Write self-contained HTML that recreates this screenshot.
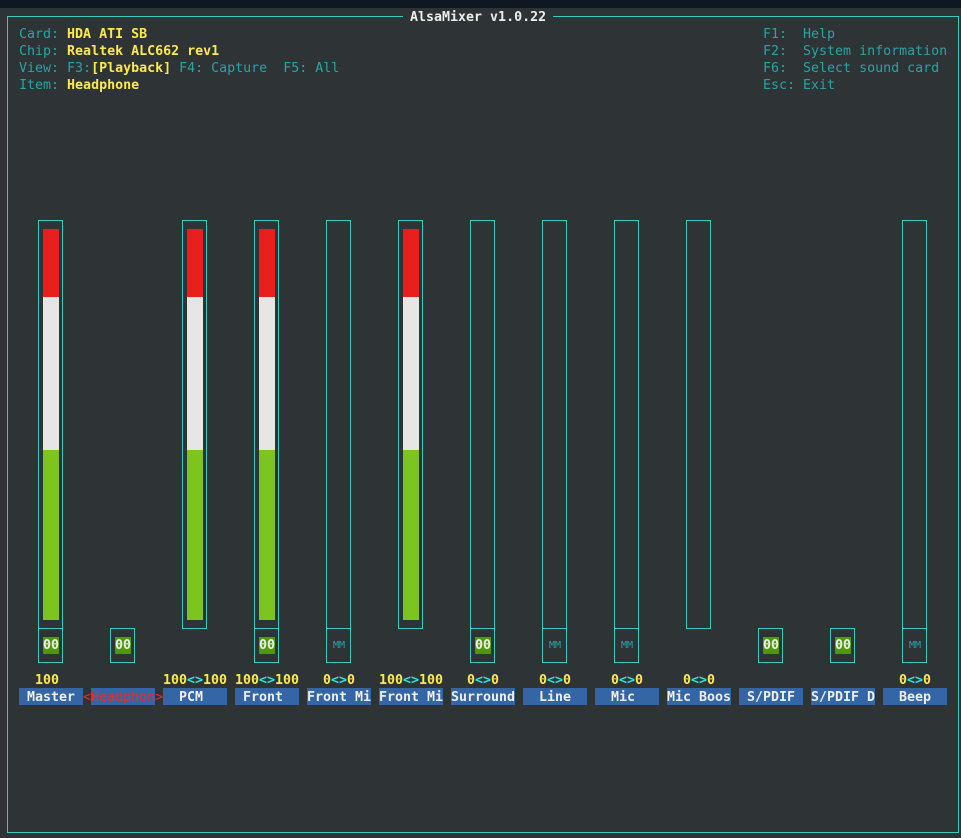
<!DOCTYPE html>
<html><head><meta charset="utf-8"><style>
html,body{margin:0;padding:0}
body{width:961px;height:838px;background:#2e3436;position:relative;overflow:hidden;font-family:"DejaVu Sans Mono","Liberation Mono",monospace;font-size:13.3px;}
.top{position:absolute;left:0;top:0;width:961px;height:8px;background:#0e1823}
.t{position:absolute;line-height:17px;height:17px;white-space:pre;padding-top:1px}
.c{color:#2aa3a5}.y{color:#fce94f;font-weight:bold}.w{color:#eeeeec;font-weight:bold}
.b{position:absolute;border:1px solid #3cc9c0;box-sizing:border-box}
.h{position:absolute;height:1px;background:#3cc9c0}
.f{position:absolute}
.lab{position:absolute;top:688px;height:17px;width:64px;background:#3465a4;color:#eeeeec;line-height:19px;white-space:pre;font-weight:bold}
.m{position:absolute;top:637px;height:17px;width:16px;line-height:18px;text-align:center}
.g{background:#4e9a06;color:#eeeeec;font-weight:bold}
.mm{color:#2aa3a5;font-size:10px}
</style></head><body>
<div class="top"></div>
<div class="b" style="left:7px;top:16px;width:952px;height:817px"></div>
<div class="t" style="left:403px;top:8px;background:#2e3436;padding:1px 7px 0;" ><span class="w">AlsaMixer v1.0.22</span></div>
<div class="t c" style="left:19px;top:25px">Card: <span class="y">HDA ATI SB</span></div>
<div class="t c" style="left:19px;top:42px">Chip: <span class="y">Realtek ALC662 rev1</span></div>
<div class="t c" style="left:19px;top:59px">View: F3:<span class="y">[Playback]</span> F4: Capture  F5: All</div>
<div class="t c" style="left:19px;top:76px">Item: <span class="y">Headphone</span></div>
<div class="t c" style="left:763px;top:25px">F1:  Help</div>
<div class="t c" style="left:763px;top:42px">F2:  System information</div>
<div class="t c" style="left:763px;top:59px">F6:  Select sound card</div>
<div class="t c" style="left:763px;top:76px">Esc: Exit</div>

<!-- 0 Master -->
<div class="b" style="left:38px;top:220px;width:25px;height:443px"></div><div class="h" style="left:38px;top:628px;width:25px"></div>
<div class="f" style="left:43px;top:229px;width:16px;height:68px;background:#e8201c"></div>
<div class="f" style="left:43px;top:297px;width:16px;height:153px;background:#e6e6e4"></div>
<div class="f" style="left:43px;top:450px;width:16px;height:170px;background:#7cc41e"></div>
<div class="m g" style="left:43px">00</div>
<div class="t y" style="left:35px;top:671px">100</div>
<div class="lab" style="left:19px"> Master</div>
<!-- 1 Headphone -->
<div class="b" style="left:110px;top:628px;width:25px;height:35px"></div>
<div class="m g" style="left:115px">00</div>
<div class="t" style="left:83px;top:688px;color:#ef2929">&lt;</div>
<div class="lab" style="left:91px;color:#ef2929;font-weight:normal">Headphon</div>
<div class="t" style="left:155px;top:688px;color:#ef2929">&gt;</div>
<!-- 2 PCM -->
<div class="b" style="left:182px;top:220px;width:25px;height:409px"></div>
<div class="f" style="left:187px;top:229px;width:16px;height:68px;background:#e8201c"></div>
<div class="f" style="left:187px;top:297px;width:16px;height:153px;background:#e6e6e4"></div>
<div class="f" style="left:187px;top:450px;width:16px;height:170px;background:#7cc41e"></div>
<div class="t y" style="left:163px;top:671px">100<span style="color:#34e2e2">&lt;&gt;</span>100</div>
<div class="lab" style="left:163px">  PCM</div>
<!-- 3 Front -->
<div class="b" style="left:254px;top:220px;width:25px;height:443px"></div><div class="h" style="left:254px;top:628px;width:25px"></div>
<div class="f" style="left:259px;top:229px;width:16px;height:68px;background:#e8201c"></div>
<div class="f" style="left:259px;top:297px;width:16px;height:153px;background:#e6e6e4"></div>
<div class="f" style="left:259px;top:450px;width:16px;height:170px;background:#7cc41e"></div>
<div class="m g" style="left:259px">00</div>
<div class="t y" style="left:235px;top:671px">100<span style="color:#34e2e2">&lt;&gt;</span>100</div>
<div class="lab" style="left:235px"> Front</div>
<!-- 4 Front Mi -->
<div class="b" style="left:326px;top:220px;width:25px;height:443px"></div><div class="h" style="left:326px;top:628px;width:25px"></div>
<div class="m mm" style="left:331px">MM</div>
<div class="t y" style="left:323px;top:671px">0<span style="color:#34e2e2">&lt;&gt;</span>0</div>
<div class="lab" style="left:307px">Front Mi</div>
<!-- 5 Front Mi -->
<div class="b" style="left:398px;top:220px;width:25px;height:409px"></div>
<div class="f" style="left:403px;top:229px;width:16px;height:68px;background:#e8201c"></div>
<div class="f" style="left:403px;top:297px;width:16px;height:153px;background:#e6e6e4"></div>
<div class="f" style="left:403px;top:450px;width:16px;height:170px;background:#7cc41e"></div>
<div class="t y" style="left:379px;top:671px">100<span style="color:#34e2e2">&lt;&gt;</span>100</div>
<div class="lab" style="left:379px">Front Mi</div>
<!-- 6 Surround -->
<div class="b" style="left:470px;top:220px;width:25px;height:443px"></div><div class="h" style="left:470px;top:628px;width:25px"></div>
<div class="m g" style="left:475px">00</div>
<div class="t y" style="left:467px;top:671px">0<span style="color:#34e2e2">&lt;&gt;</span>0</div>
<div class="lab" style="left:451px">Surround</div>
<!-- 7 Line -->
<div class="b" style="left:542px;top:220px;width:25px;height:443px"></div><div class="h" style="left:542px;top:628px;width:25px"></div>
<div class="m mm" style="left:547px">MM</div>
<div class="t y" style="left:539px;top:671px">0<span style="color:#34e2e2">&lt;&gt;</span>0</div>
<div class="lab" style="left:523px">  Line</div>
<!-- 8 Mic -->
<div class="b" style="left:614px;top:220px;width:25px;height:443px"></div><div class="h" style="left:614px;top:628px;width:25px"></div>
<div class="m mm" style="left:619px">MM</div>
<div class="t y" style="left:611px;top:671px">0<span style="color:#34e2e2">&lt;&gt;</span>0</div>
<div class="lab" style="left:595px">  Mic</div>
<!-- 9 Mic Boos -->
<div class="b" style="left:686px;top:220px;width:25px;height:409px"></div>
<div class="t y" style="left:683px;top:671px">0<span style="color:#34e2e2">&lt;&gt;</span>0</div>
<div class="lab" style="left:667px">Mic Boos</div>
<!-- 10 S/PDIF -->
<div class="b" style="left:758px;top:628px;width:25px;height:35px"></div>
<div class="m g" style="left:763px">00</div>
<div class="lab" style="left:739px"> S/PDIF</div>
<!-- 11 S/PDIF D -->
<div class="b" style="left:830px;top:628px;width:25px;height:35px"></div>
<div class="m g" style="left:835px">00</div>
<div class="lab" style="left:811px">S/PDIF D</div>
<!-- 12 Beep -->
<div class="b" style="left:902px;top:220px;width:25px;height:443px"></div><div class="h" style="left:902px;top:628px;width:25px"></div>
<div class="m mm" style="left:907px">MM</div>
<div class="t y" style="left:899px;top:671px">0<span style="color:#34e2e2">&lt;&gt;</span>0</div>
<div class="lab" style="left:883px">  Beep</div>
</body></html>
